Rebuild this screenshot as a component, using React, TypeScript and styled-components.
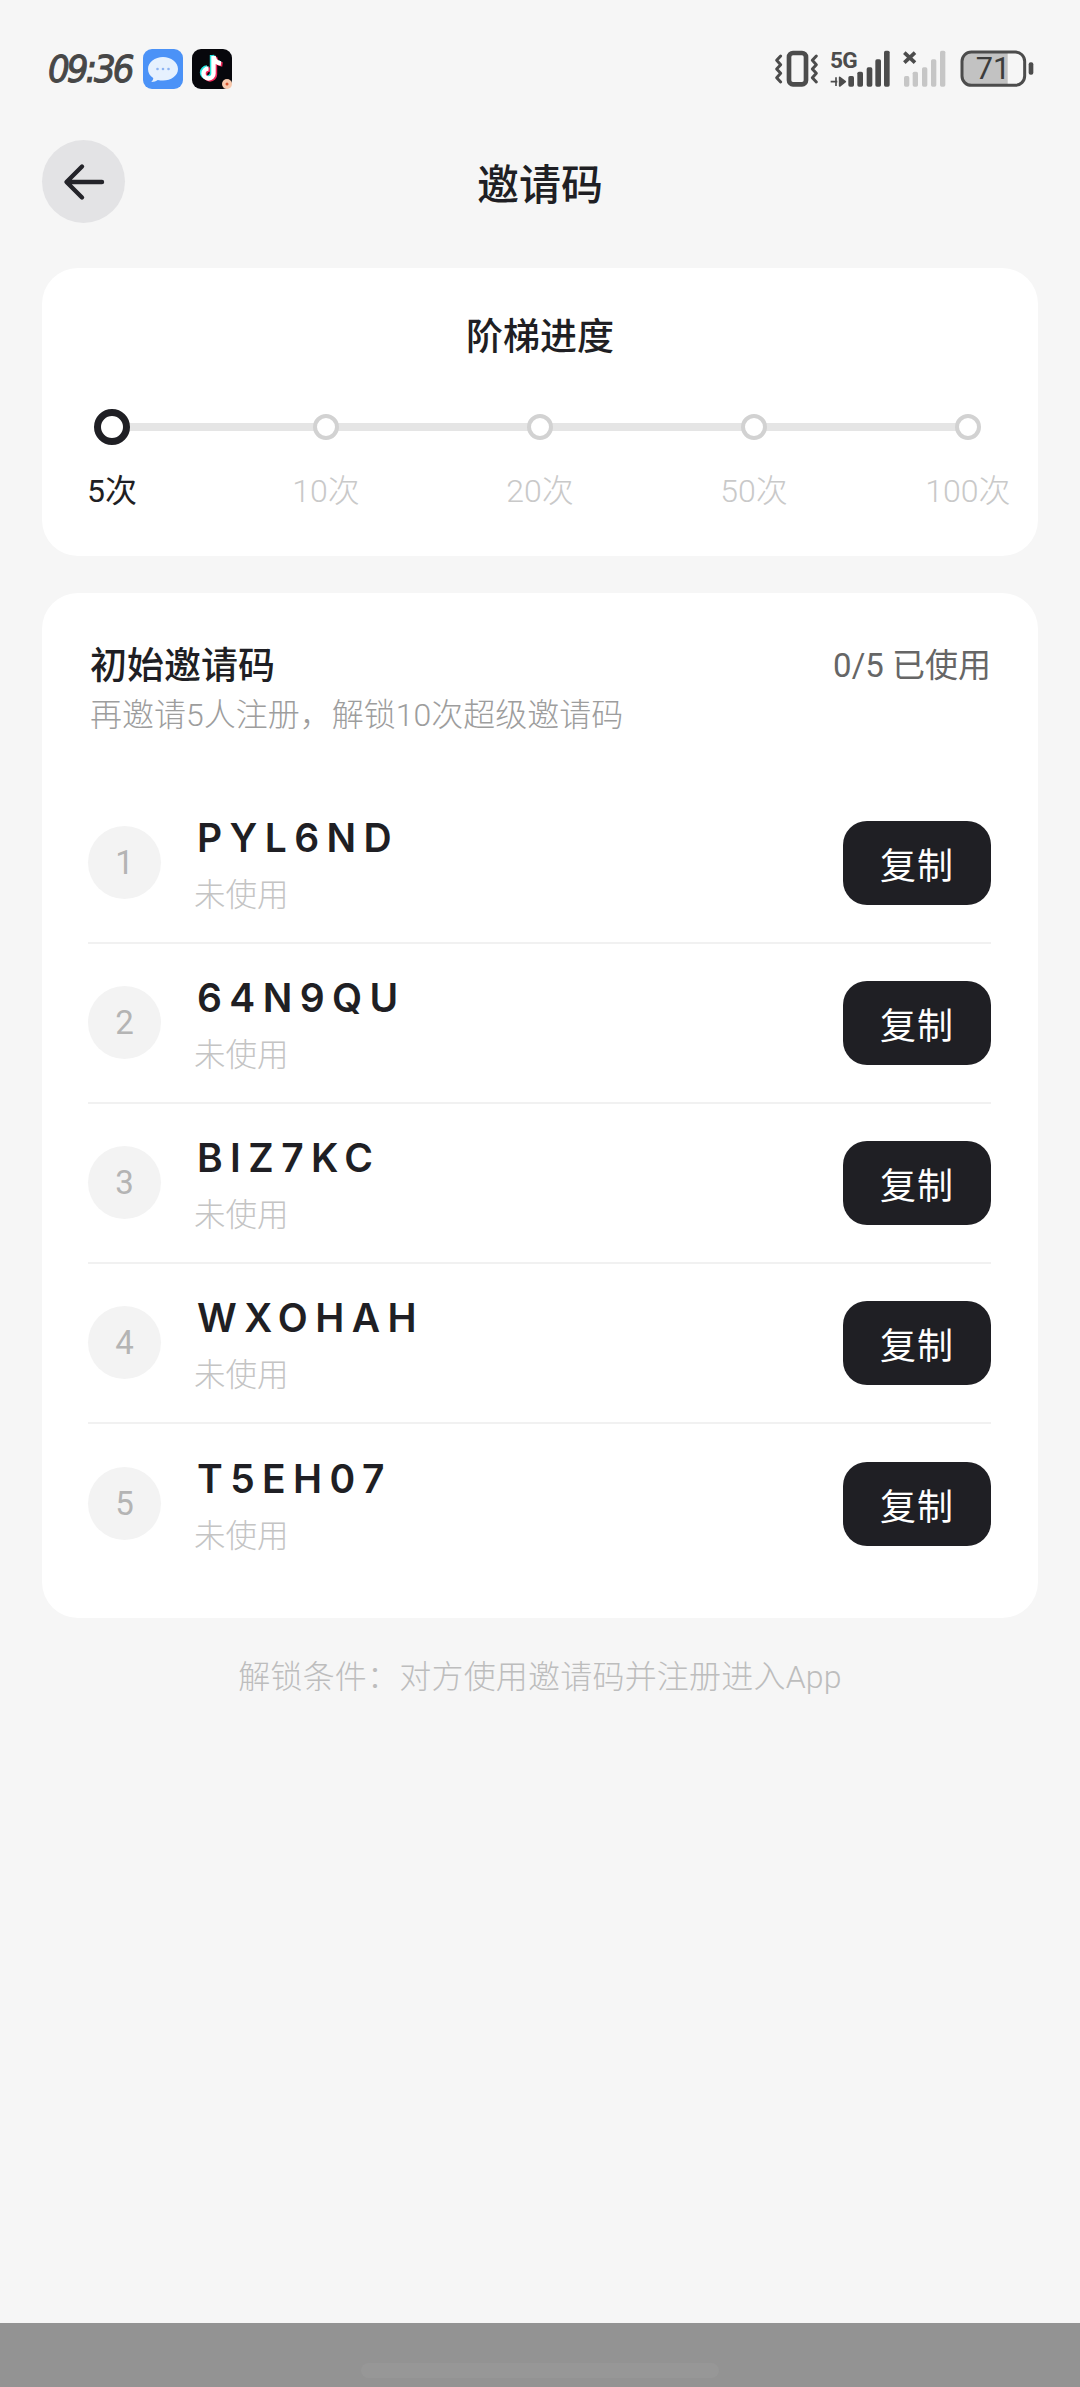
import React from "react";
import styled, { createGlobalStyle } from "styled-components";

const sans = `Roboto, "Noto Sans CJK SC", sans-serif`;

const Global = createGlobalStyle`
  html, body { margin: 0; padding: 0; background: #f6f6f6; }
  * { box-sizing: border-box; }
  body { font-family: ${sans}; }
`;

const Page = styled.div`
  width: 1080px;
  height: 2387px;
  display: flex;
  flex-direction: column;
  background: #f6f6f6;
`;

const Main = styled.main`
  flex: 1;
  padding: 0 42px;
`;

const StatusBar = styled.div`
  height: 140px;
  padding: 49px 0 0 48px;
  display: flex;
  justify-content: space-between;
  align-items: flex-start;
`;

const StatusLeft = styled.div`
  display: flex;
  align-items: center;
  height: 40px;
`;

const Clock = styled.span`
  width: 95px;
  font-family: "DejaVu Sans Condensed", "DejaVu Sans", sans-serif;
  font-style: italic;
  font-size: 38px;
  letter-spacing: -3px;
  color: #474747;
  -webkit-text-stroke: 1px #474747;
`;

const AppIcon = styled.svg`
  width: 40px;
  height: 40px;
  margin-right: 9px;
  display: block;
`;

const StatusIcons = styled.svg`
  width: 340px;
  height: 80px;
  margin-top: -19px;
  display: block;
`;

const Header = styled.header`
  height: 83px;
  position: relative;
  display: flex;
  align-items: center;
  justify-content: center;
  margin-bottom: 45px;
`;

const BackButton = styled.button`
  position: absolute;
  left: 0;
  top: 0;
  width: 83px;
  height: 83px;
  border: 0;
  padding: 0;
  border-radius: 50%;
  background: #e3e3e5;
  display: flex;
  align-items: center;
  justify-content: center;
`;

const PageTitle = styled.h1`
  margin: 0;
  font-size: 42px;
  font-weight: 500;
  color: #1f1f24;
`;

const Card = styled.section`
  background: #fff;
  border-radius: 36px;
`;

const ProgressCard = styled(Card)`
  height: 288px;
  padding: 44px 25px 0;
  margin-bottom: 37px;
`;

const ProgressTitle = styled.h2`
  margin: 0 0 45px;
  height: 52px;
  line-height: 52px;
  text-align: center;
  font-size: 37px;
  font-weight: 500;
  color: #1f1f24;
`;

const Steps = styled.div`
  position: relative;
  display: flex;
  justify-content: space-between;
`;

const Track = styled.div`
  position: absolute;
  left: 45px;
  right: 45px;
  top: 14px;
  height: 8px;
  background: #e5e5e5;
`;

const Step = styled.div`
  position: relative;
  width: 90px;
  display: flex;
  flex-direction: column;
  align-items: center;
`;

const DotSlot = styled.div`
  height: 36px;
  display: flex;
  align-items: center;
  justify-content: center;
`;

const Dot = styled.span<{ $active: boolean }>`
  display: block;
  width: ${(p) => (p.$active ? 36 : 26)}px;
  height: ${(p) => (p.$active ? 36 : 26)}px;
  border-radius: 50%;
  background: #fff;
  border: ${(p) => (p.$active ? "7px solid #1f1f24" : "4px solid #d2d2d2")};
`;

const StepLabel = styled.span<{ $active: boolean }>`
  margin-top: 24px;
  height: 44px;
  line-height: 44px;
  white-space: nowrap;
  font-size: 32px;
  font-weight: ${(p) => (p.$active ? 400 : 300)};
  color: ${(p) => (p.$active ? "#1f1f24" : "#c9c9c9")};
`;

const CodesCard = styled(Card)`
  height: 1025px;
  padding: 50px 47px 0 46px;
`;

const CodesHead = styled.div`
  display: flex;
  justify-content: space-between;
  align-items: flex-start;
  margin-left: 2px;
  margin-bottom: 47px;
`;

const HeadText = styled.div`
  display: flex;
  flex-direction: column;
`;

const CodesTitle = styled.h2`
  margin: 0;
  height: 48px;
  line-height: 48px;
  font-size: 37px;
  font-weight: 500;
  color: #1f1f24;
`;

const CodesHint = styled.p`
  margin: 2px 0 0;
  height: 44px;
  line-height: 44px;
  font-size: 32px;
  font-weight: 300;
  color: #9d9d9d;
`;

const UsedCount = styled.span`
  height: 48px;
  line-height: 46px;
  font-size: 33px;
  color: #666;
`;

const CodeRow = styled.div<{ $last: boolean }>`
  height: 160px;
  display: flex;
  align-items: center;
  border-bottom: ${(p) => (p.$last ? "0" : "2px solid #f1f1f1")};
`;

const IndexBadge = styled.div`
  width: 73px;
  height: 73px;
  border-radius: 50%;
  background: #f3f3f3;
  color: #b4b4b4;
  font-size: 33px;
  display: flex;
  align-items: center;
  justify-content: center;
  margin-right: 33px;
  margin-top: -1px;
  flex: none;
`;

const CodeText = styled.div`
  flex: 1;
  padding-top: 4px;
  display: flex;
  flex-direction: column;
`;

const Code = styled.span`
  height: 50px;
  line-height: 50px;
  margin-left: 3px;
  font-family: Inter, sans-serif;
  font-size: 39px;
  font-weight: 600;
  letter-spacing: 7.4px;
  color: #1f1f24;
`;

const CodeState = styled.span`
  margin-top: 11px;
  height: 44px;
  line-height: 44px;
  font-size: 31.5px;
  font-weight: 300;
  color: #c4c4c4;
`;

const CopyButton = styled.button`
  width: 148px;
  height: 84px;
  border: 0;
  border-radius: 24px;
  background: #1f1f24;
  color: #fff;
  font-family: ${sans};
  font-size: 36px;
  font-weight: 400;
  letter-spacing: 1px;
  padding: 0;
  flex: none;
`;

const Note = styled.p`
  margin: 37px 0 0;
  height: 44px;
  line-height: 44px;
  text-align: center;
  font-size: 32px;
  font-weight: 300;
  letter-spacing: 0.2px;
  color: #bdbdbd;
`;

const NavBar = styled.div`
  height: 64px;
  background: #939393;
  padding-top: 40px;
  display: flex;
  justify-content: center;
  align-items: flex-start;
`;

const HomeHandle = styled.div`
  width: 358px;
  height: 15px;
  border-radius: 8px;
  background: #979797;
`;

const steps = ["5次", "10次", "20次", "50次", "100次"];
const codes = ["PYL6ND", "64N9QU", "BIZ7KC", "WXOHAH", "T5EH07"];

const MessagesIcon = () => (
  <AppIcon viewBox="0 0 40 40">
    <rect width="40" height="40" rx="9" fill="#4b92f7" />
    <path
      d="M20 8c-8 0-15 5-15 12 0 3.800 2 7 5.200 9 .2 1.400-.6 2.800-2 4 2.800 0 5-.7 6.600-2 1.700.4 3.400.6 5.200.6 8 0 15-4.900 15-11.600S28 8 20 8z"
      fill="#e6f1fe"
    />
    <circle cx="14.500" cy="20" r="1.300" fill="#8db4f2" />
    <circle cx="20" cy="20" r="1.300" fill="#8db4f2" />
    <circle cx="25.500" cy="20" r="1.300" fill="#8db4f2" />
  </AppIcon>
);

const notePath =
  "M21.500 7v17.500a5 5 0 1 1-5-5M21.500 7c.6 4.500 3.400 7 7.500 7.500";

const TikTokIcon = () => (
  <AppIcon viewBox="0 0 40 40">
    <rect width="40" height="40" rx="9" fill="#07070c" />
    <g fill="none" strokeWidth="4.400" strokeLinecap="butt">
      <path d={notePath} stroke="#25e3e0" transform="translate(-1.500 -1)" />
      <path d={notePath} stroke="#f2295b" transform="translate(1.500 1)" />
      <path d={notePath} stroke="#fff" />
    </g>
    <circle cx="35" cy="35" r="5" fill="#f8c9ad" />
    <circle cx="35" cy="35" r="1.500" fill="#d8552f" />
  </AppIcon>
);

const BackArrow = () => (
  <svg width="42" height="40" viewBox="0 0 42 40" fill="none">
    <path
      d="M39 20H4M19 4.500 3.500 20 19 35.500"
      stroke="#24242a"
      strokeWidth="4.400"
      strokeLinecap="round"
      strokeLinejoin="round"
    />
  </svg>
);

const wiggle = (x: number) =>
  `M${x} 78l-12 13 12 13-12 13 12 13-12 13 12 13`;

// Vibrate mode, 5G signal, empty second SIM and the battery gauge, drawn at 3x units.
const StatusGlyphs = () => (
  <StatusIcons viewBox="0 0 1020 240">
    <g fill="none" stroke="#4c4c4c" strokeLinecap="round" strokeLinejoin="round">
      <rect x="147" y="69" width="51" height="94" rx="12" strokeWidth="14" />
      <path d={wiggle(122)} strokeWidth="9" />
      <path d={wiggle(229)} strokeWidth="9" />
    </g>
    <text x="270" y="114" fontFamily="Roboto, sans-serif" fontSize="68" fontWeight="700" letterSpacing="-2" fill="#4c4c4c">
      5G
    </text>
    <path d="M272 155h20M288 142v26M299 142v26l17-13z" fill="#4c4c4c" stroke="#4c4c4c" strokeWidth="5" strokeLinejoin="round" />
    <g fill="#4c4c4c">
      <rect x="325" y="138" width="17" height="32" rx="5" />
      <rect x="352" y="125" width="17" height="45" rx="5" />
      <rect x="380" y="112" width="17" height="58" rx="5" />
      <rect x="406" y="88" width="17" height="82" rx="5" />
      <rect x="432" y="62" width="17" height="108" rx="5" />
    </g>
    <path d="M493 68l32 30M525 68l-32 30" stroke="#4c4c4c" strokeWidth="11" />
    <g fill="#c6c6c6">
      <rect x="492" y="138" width="16" height="32" rx="5" />
      <rect x="518" y="125" width="16" height="45" rx="5" />
      <rect x="546" y="112" width="16" height="58" rx="5" />
      <rect x="573" y="88" width="16" height="82" rx="5" />
      <rect x="600" y="62" width="16" height="108" rx="5" />
    </g>
    <path d="M695 66h108v100H695a28 28 0 0 1-28-28V94a28 28 0 0 1 28-28z" fill="#c2c2c2" />
    <rect x="666" y="66" width="188" height="100" rx="28" fill="none" stroke="#4c4c4c" strokeWidth="9" />
    <rect x="866" y="97" width="14" height="37" rx="6" fill="#4c4c4c" />
    <text x="759" y="147" textAnchor="middle" fontFamily="Roboto, sans-serif" fontSize="92" fill="#3c3c3c">
      71
    </text>
  </StatusIcons>
);

export default function App() {
  return (
    <Page>
      <Global />
      <StatusBar>
        <StatusLeft>
          <Clock>09:36</Clock>
          <MessagesIcon />
          <TikTokIcon />
        </StatusLeft>
        <StatusGlyphs />
      </StatusBar>
      <Main>
        <Header>
          <BackButton aria-label="返回">
            <BackArrow />
          </BackButton>
          <PageTitle>邀请码</PageTitle>
        </Header>
        <ProgressCard>
          <ProgressTitle>阶梯进度</ProgressTitle>
          <Steps>
            <Track />
            {steps.map((label, i) => (
              <Step key={label}>
                <DotSlot>
                  <Dot $active={i === 0} />
                </DotSlot>
                <StepLabel $active={i === 0}>{label}</StepLabel>
              </Step>
            ))}
          </Steps>
        </ProgressCard>
        <CodesCard>
          <CodesHead>
            <HeadText>
              <CodesTitle>初始邀请码</CodesTitle>
              <CodesHint>再邀请5人注册，解锁10次超级邀请码</CodesHint>
            </HeadText>
            <UsedCount>0/5 已使用</UsedCount>
          </CodesHead>
          {codes.map((code, i) => (
            <CodeRow key={code} $last={i === codes.length - 1}>
              <IndexBadge>{i + 1}</IndexBadge>
              <CodeText>
                <Code>{code}</Code>
                <CodeState>未使用</CodeState>
              </CodeText>
              <CopyButton>复制</CopyButton>
            </CodeRow>
          ))}
        </CodesCard>
        <Note>解锁条件：对方使用邀请码并注册进入App</Note>
      </Main>
      <NavBar>
        <HomeHandle />
      </NavBar>
    </Page>
  );
}
